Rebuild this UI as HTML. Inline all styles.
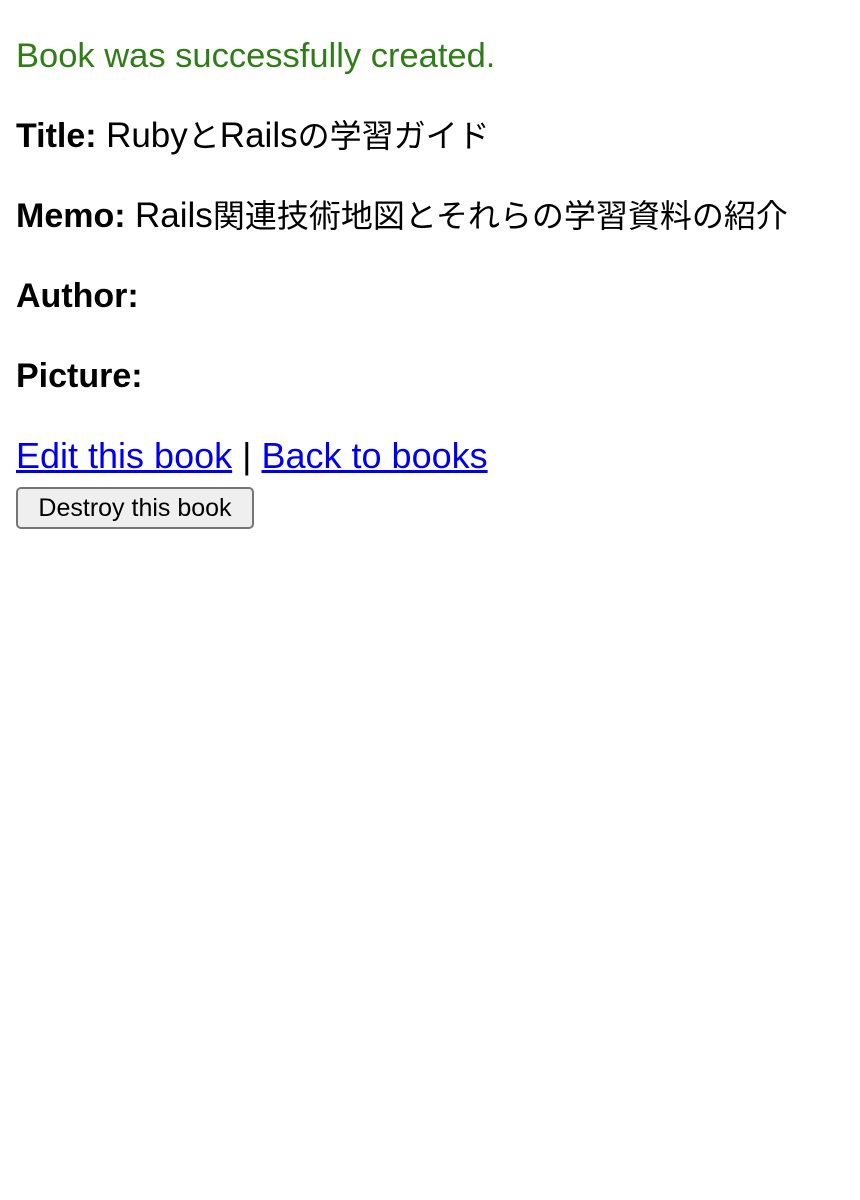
<!DOCTYPE html>
<html><head><meta charset="utf-8"><style>
body{margin:0;padding:0 16px;font-family:"Liberation Sans","Noto Sans CJK JP",sans-serif;font-size:34px;background:#fff;color:#000}
p{margin:32px 0;line-height:48px;height:48px;white-space:nowrap}
#notice{color:#2f7d16;font-size:34.5px}
.j{font-size:32px}
.v{font-size:35px}
a{color:#0000ee;text-decoration:underline}
.links{margin-bottom:0;font-size:36px}
button{position:absolute;left:16px;top:487px;width:238px;height:42px;font-family:"Liberation Sans",sans-serif;font-size:25px;background:#efefef;border:2px solid #767676;border-radius:5px;padding:0;color:#000}
</style></head><body>
<p id="notice">Book was successfully created.</p>
<p><strong>Title:</strong> <span class="v">Ruby</span><span class="j">と</span><span class="v">Rails</span><span class="j">の学習ガイド</span></p>
<p><strong>Memo:</strong> <span class="v">Rails</span><span class="j">関連技術地図とそれらの学習資料の紹介</span></p>
<p><strong>Author:</strong></p>
<p><strong>Picture:</strong></p>
<p class="links"><a>Edit this book</a> | <a>Back to books</a></p>
<button>Destroy this book</button>
</body></html>
